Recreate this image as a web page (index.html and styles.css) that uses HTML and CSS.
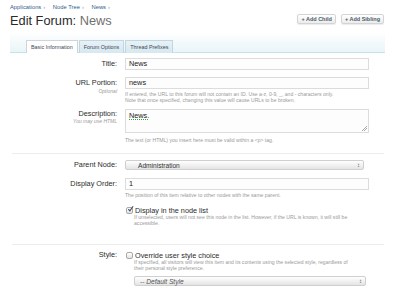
FILE: index.html
```html
<!DOCTYPE html>
<html lang="en">
  <head>
    <meta charset="UTF-8" />
    <title>Edit Forum: News</title>
    <link rel="stylesheet" href="styles.css">
  </head>
  <body>
    <!-- Title bar -->
    <div class="titleBar">
      <div class="titleText">
        <nav class="breadcrumb">
          <a href="#">Applications</a><span class="arrow">&rsaquo;</span>
          <a href="#">Node Tree</a><span class="arrow">&rsaquo;</span>
          <a href="#">News</a><span class="arrow">&rsaquo;</span>
        </nav>
        <h1>Edit Forum: <em>News</em></h1>
      </div>
      <div class="topCtrl">
        <a class="button" href="#">+ Add Child</a>
        <a class="button" href="#">+ Add Sibling</a>
      </div>
    </div>

    <!-- Tabs -->
    <div class="tabBar">
      <ul class="tabs">
        <li class="active">Basic Information</li>
        <li>Forum Options</li>
        <li>Thread Prefixes</li>
      </ul>
    </div>

    <form class="editForm">
      <div class="ctrlUnit">
        <label class="ctrlLabel">Title:</label>
        <div class="ctrlField">
          <div class="textCtrl">News</div>
        </div>
      </div>

      <div class="ctrlUnit urlUnit">
        <label class="ctrlLabel">URL Portion:<span class="hint">Optional</span></label>
        <div class="ctrlField">
          <div class="textCtrl">news</div>
          <p class="explain">If entered, the URL to this forum will not contain an ID. Use a-z, 0-9, _, and - characters only.<br>Note that once specified, changing this value will cause URLs to be broken.</p>
        </div>
      </div>

      <div class="ctrlUnit descUnit">
        <label class="ctrlLabel">Description:<span class="hint">You may use HTML</span></label>
        <div class="ctrlField">
          <div class="textCtrl textArea"><span class="spell">News.</span></div>
          <p class="explain">The text (or HTML) you insert here must be valid within a &lt;p&gt; tag.</p>
        </div>
      </div>

      <hr class="sep" />

      <div class="ctrlUnit parentUnit">
        <label class="ctrlLabel">Parent Node:</label>
        <div class="ctrlField">
          <div class="selectCtrl">Administration<span class="updown">&#8597;</span></div>
        </div>
      </div>

      <div class="ctrlUnit orderUnit">
        <label class="ctrlLabel">Display Order:</label>
        <div class="ctrlField">
          <div class="textCtrl">1</div>
          <p class="explain">The position of this item relative to other nodes with the same parent.</p>
        </div>
      </div>

      <div class="ctrlUnit checkUnit">
        <label class="ctrlLabel"></label>
        <div class="ctrlField">
          <div class="checkRow">
            <span class="checkbox checked">
              <svg viewBox="0 0 8 8" width="8" height="8"><path d="M1.5 4.2 L3.3 6.2 L7 0.8" fill="none" stroke="#3d4f66" stroke-width="1.3"/></svg>
            </span>
            Display in the node list
          </div>
          <p class="explain indent">If unselected, users will not see this node in the list. However, if the URL is known, it will still be<br>accessible.</p>
        </div>
      </div>

      <hr class="sep sep2" />

      <div class="ctrlUnit styleUnit">
        <label class="ctrlLabel">Style:</label>
        <div class="ctrlField">
          <div class="checkRow">
            <span class="checkbox"></span>
            Override user style choice
          </div>
          <p class="explain indent">If specified, all visitors will view this item and its contents using the selected style, regardless of<br>their personal style preference.</p>
          <div class="selectCtrl styleSelect"><i>-- Default Style</i><span class="updown">&#8597;</span></div>
        </div>
      </div>
    </form>
  </body>
</html>
```

FILE: styles.css
```css
* {
  margin: 0;
  padding: 0;
  box-sizing: border-box;
}

body {
  font-family: "Liberation Sans", Arial, sans-serif;
  background-color: #ffffff;
  color: #333;
  width: 396px;
  height: 300px;
  overflow: hidden;
}

/* Title bar */
.titleBar {
  display: flex;
  justify-content: space-between;
  align-items: flex-start;
  padding: 4px 12px 0 10px;
  height: 32px;
}

.breadcrumb {
  font-size: 5.8px;
  line-height: 6px;
  color: #2f5d8c;
}

.breadcrumb a {
  color: #2f5d8c;
  text-decoration: none;
}

.breadcrumb .arrow {
  color: #8aa0b5;
  margin: 0 6px 0 2px;
}

h1 {
  font-size: 12.8px;
  font-weight: normal;
  line-height: 15px;
  margin-top: 3px;
  color: #2a2a2a;
}

h1 em {
  font-style: normal;
  color: #707070;
}

.topCtrl {
  display: flex;
  gap: 5px;
  margin-top: 10px;
}

.button {
  display: block;
  height: 10px;
  padding: 0 3px;
  font-size: 5.5px;
  line-height: 9px;
  font-weight: bold;
  color: #4b5b6c;
  text-decoration: none;
  border: 1px solid #d4d4d4;
  border-radius: 2px;
  background: linear-gradient(#ffffff, #ececec);
  box-shadow: 0 1px 1px rgba(0, 0, 0, 0.08);
}

/* Tabs */
.tabBar {
  margin: 0 11px 0 10px;
  height: 21px;
  padding-top: 8px;
  background: linear-gradient(rgba(234, 246, 249, 0), #e9f5f8);
  border-bottom: 1px solid #c6e2ea;
}

.tabs {
  list-style: none;
  display: flex;
  padding-left: 16px;
  height: 13px;
}

.tabs li {
  height: 13px;
  padding: 0 4px;
  font-size: 5.4px;
  line-height: 12px;
  color: #3d4756;
  background: linear-gradient(#e6f2f7, #d6e8f0);
  border: 1px solid #c3d6df;
  border-bottom: none;
  margin-right: 1px;
}

.tabs li.active {
  background: #ffffff;
  border-color: #cfd4d8;
  height: 13px;
  margin-bottom: -1px;
  position: relative;
}

/* Form rows */
.editForm {
  padding-top: 5px;
}

.ctrlUnit {
  display: grid;
  grid-template-columns: 117px 244px;
  column-gap: 8px;
  margin-bottom: 7px;
}

.ctrlLabel {
  text-align: right;
  font-size: 7.3px;
  line-height: 12px;
  color: #2c2c2c;
}

.hint {
  display: block;
  font-size: 5px;
  line-height: 5px;
  font-style: italic;
  color: #9a9a9a;
}

.textCtrl {
  height: 12px;
  padding: 0 3px;
  font-size: 7.3px;
  line-height: 10px;
  color: #222;
  background-color: #fdfdfd;
  border: 1px solid #dcdcdc;
}

.textArea {
  height: 24px;
  position: relative;
  padding-top: 1px;
}

.textArea::after {
  content: "";
  position: absolute;
  right: 1px;
  bottom: 1px;
  width: 5px;
  height: 5px;
  background: linear-gradient(135deg, transparent 45%, #aaa 45%, #aaa 55%, transparent 55%, transparent 70%, #aaa 70%, #aaa 80%, transparent 80%);
}

.spell {
  text-decoration: underline dotted #3ca03c;
}

.explain {
  font-size: 5.1px;
  line-height: 6px;
  color: #999;
  margin-top: 2px;
}

.explain.indent {
  padding-left: 9px;
  margin-top: 0;
}

.urlUnit {
  margin-bottom: 6px;
}

.descUnit .ctrlLabel {
  line-height: 10px;
}

.descUnit .explain {
  margin-top: 4px;
}

.sep {
  border: none;
  border-top: 1px solid #ececec;
  margin: 10px 12px 6px 12px;
}

.sep2 {
  margin-top: 18px;
  margin-bottom: 6px;
}

.selectCtrl {
  position: relative;
  height: 10px;
  width: 239px;
  padding-left: 12px;
  font-size: 6.6px;
  line-height: 9px;
  color: #333;
  border: 1px solid #cfcfcf;
  border-radius: 2px;
  background: linear-gradient(#ffffff, #e4e4e4);
}

.updown {
  position: absolute;
  right: 3px;
  top: 0;
  font-size: 6px;
  color: #555;
}

.parentUnit {
  margin-bottom: 8px;
}

.parentUnit .ctrlLabel {
  line-height: 10px;
}

.orderUnit {
  margin-bottom: 8px;
}

.checkRow {
  display: flex;
  align-items: center;
  gap: 2px;
  height: 8px;
  font-size: 7.3px;
  color: #2c2c2c;
}

.checkbox {
  display: flex;
  align-items: center;
  justify-content: center;
  width: 7px;
  height: 7px;
  margin-left: 1px;
  border: 1px solid #a9a9a9;
  border-radius: 2px;
  background: linear-gradient(#ffffff, #e2e2e2);
}

.checkbox svg {
  width: 8px;
  height: 8px;
  margin: -2px -2px 0 0;
}

.checkUnit .ctrlLabel,
.styleUnit .ctrlLabel {
  line-height: 8px;
}

.styleSelect {
  width: 232px;
  margin-left: 9px;
  margin-top: 5px;
  padding-left: 5px;
  color: #555;
}
```
